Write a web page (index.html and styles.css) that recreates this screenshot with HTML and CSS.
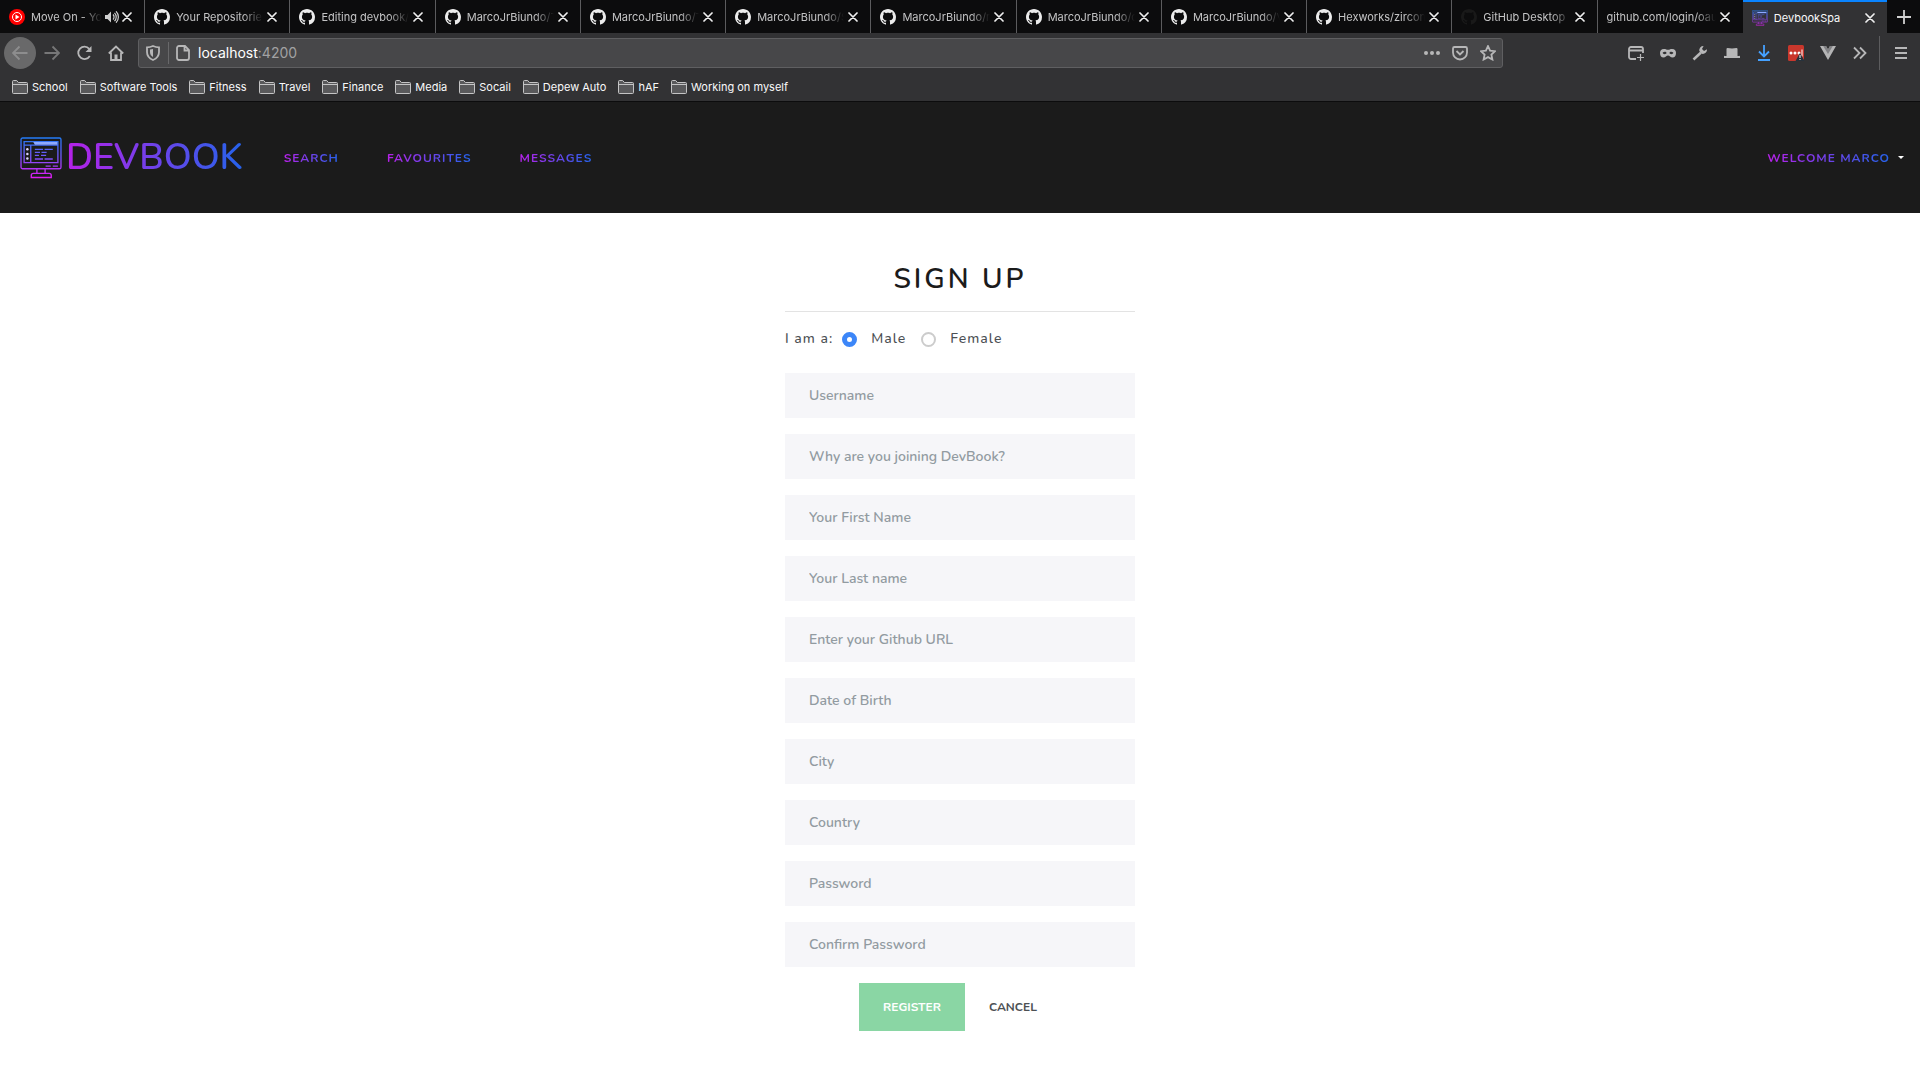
FILE: index.html
```html
<!DOCTYPE html>
<html lang="en">
<head>
<meta charset="utf-8">
<title>DevbookSpa</title>
<link rel="stylesheet" href="styles.css">
</head>
<body>
<svg class="defs" aria-hidden="true">
  <defs>
    <linearGradient id="brandFill" gradientUnits="userSpaceOnUse" x1="0" y1="0" x2="0" y2="41"><stop offset="0" stop-color="#1f7cf5"/><stop offset=".45" stop-color="#7058fa"/><stop offset="1" stop-color="#e818f4"/></linearGradient>
    <symbol id="github" viewBox="0 0 16 16"><path d="M8 0C3.58 0 0 3.58 0 8c0 3.54 2.29 6.53 5.47 7.59.4.07.55-.17.55-.38 0-.19-.01-.82-.01-1.49-2.01.37-2.53-.49-2.69-.94-.09-.23-.48-.94-.82-1.13-.28-.15-.68-.52-.01-.53.63-.01 1.08.58 1.23.82.72 1.21 1.87.87 2.33.66.07-.52.28-.87.51-1.07-1.78-.2-3.64-.89-3.64-3.95 0-.87.31-1.59.82-2.15-.08-.2-.36-1.02.08-2.12 0 0 .67-.21 2.2.82.64-.18 1.32-.27 2-.27s1.36.09 2 .27c1.53-1.04 2.2-.82 2.2-.82.44 1.1.16 1.92.08 2.12.51.56.82 1.27.82 2.15 0 3.07-1.87 3.75-3.65 3.95.29.25.54.73.54 1.48 0 1.07-.01 1.93-.01 2.2 0 .21.15.46.55.38A8.01 8.01 0 0 0 16 8c0-4.42-3.58-8-8-8z" fill="currentColor"/></symbol>
    <symbol id="close" viewBox="0 0 10 10"><path d="M1 1l8 8M9 1l-8 8" stroke="currentColor" stroke-width="1.7" stroke-linecap="round"/></symbol>
    <symbol id="folder" viewBox="0 0 16 14"><path d="M.5 12.5v-11a1 1 0 0 1 1-1h3.2l1.6 2h8.2a1 1 0 0 1 1 1v9a1 1 0 0 1-1 1h-13a1 1 0 0 1-1-1zM.5 4.500h15" fill="#59595b" stroke="#c4c4c5"/></symbol>
    <symbol id="monitor" viewBox="0 0 41 41">
      <g fill="none" stroke="url(#brandFill)" stroke-width="1.3">
        <rect x="1" y="1" width="39" height="30" rx="1.5"/><path d="M4 4.500h33v20.500h-33zM10.500 8v17M4 8h33M16.500 31v4.500M24.500 31v4.500M13 35.500h15.500a2 2 0 0 1 2 2v2h-19.500v-2a2 2 0 0 1 2-2z"/>
        <path d="M14.500 12h8M24 12h8M14.500 15h5M21 15h5M14.500 18h4M20.500 18h5M14.500 21.500h8M24 21.500h8M25 28.500h5M32 28.500h5"/>
      </g>
      <path d="M13 5h23.500v2.600H14.500z" fill="#8eaaff"/>
      <g fill="#ddd3ff"><circle cx="7.200" cy="12" r="1.200"/><circle cx="7.200" cy="16.500" r="1.200"/><circle cx="7.200" cy="21" r="1.200"/></g>
    </symbol>
  </defs>
</svg>

<header class="browser">
  <div class="tabs">
    <div class="tab"><svg class="favicon" viewBox="0 0 16 16"><circle cx="8" cy="8" r="8" fill="#f00"/><circle cx="8" cy="8" r="4.500" fill="none" stroke="#fff"/><path d="M6.500 5.500v5l4-2.500z" fill="#fff"/></svg><span class="tab-title">Move On - YouTube</span><svg class="speaker" viewBox="0 0 14 12" fill="none" stroke="#d0d0d0" stroke-width="1.200"><path d="M0 4h2.500L6 .5v11L2.500 8H0z" fill="#d0d0d0" stroke="none"/><path d="M8 3.500a3.500 3.500 0 0 1 0 5M9.500 1.800a6 6 0 0 1 0 8.400M11 .3a8 8 0 0 1 0 11.400"/></svg><button class="tab-close" aria-label="Close tab"><svg><use href="#close"/></svg></button></div>
    <div class="tab"><svg class="favicon"><use href="#github"/></svg><span class="tab-title">Your Repositories</span><button class="tab-close" aria-label="Close tab"><svg><use href="#close"/></svg></button></div>
    <div class="tab"><svg class="favicon"><use href="#github"/></svg><span class="tab-title">Editing devbook/README</span><button class="tab-close" aria-label="Close tab"><svg><use href="#close"/></svg></button></div>
    <div class="tab"><svg class="favicon"><use href="#github"/></svg><span class="tab-title">MarcoJrBiundo/TodoApp</span><button class="tab-close" aria-label="Close tab"><svg><use href="#close"/></svg></button></div>
    <div class="tab"><svg class="favicon"><use href="#github"/></svg><span class="tab-title">MarcoJrBiundo/TodoApp</span><button class="tab-close" aria-label="Close tab"><svg><use href="#close"/></svg></button></div>
    <div class="tab"><svg class="favicon"><use href="#github"/></svg><span class="tab-title">MarcoJrBiundo/Spa</span><button class="tab-close" aria-label="Close tab"><svg><use href="#close"/></svg></button></div>
    <div class="tab"><svg class="favicon"><use href="#github"/></svg><span class="tab-title">MarcoJrBiundo/repo</span><button class="tab-close" aria-label="Close tab"><svg><use href="#close"/></svg></button></div>
    <div class="tab"><svg class="favicon"><use href="#github"/></svg><span class="tab-title">MarcoJrBiundo/chat</span><button class="tab-close" aria-label="Close tab"><svg><use href="#close"/></svg></button></div>
    <div class="tab"><svg class="favicon"><use href="#github"/></svg><span class="tab-title">MarcoJrBiundo/Vue</span><button class="tab-close" aria-label="Close tab"><svg><use href="#close"/></svg></button></div>
    <div class="tab"><svg class="favicon"><use href="#github"/></svg><span class="tab-title">Hexworks/zircon</span><button class="tab-close" aria-label="Close tab"><svg><use href="#close"/></svg></button></div>
    <div class="tab"><svg class="favicon favicon-dark"><use href="#github"/></svg><span class="tab-title">GitHub Desktop</span><button class="tab-close" aria-label="Close tab"><svg><use href="#close"/></svg></button></div>
    <div class="tab"><span class="tab-title">github.com/login/oauth</span><button class="tab-close" aria-label="Close tab"><svg><use href="#close"/></svg></button></div>
    <div class="tab tab-active"><svg class="favicon"><use href="#monitor"/></svg><span class="tab-title">DevbookSpa</span><button class="tab-close" aria-label="Close tab"><svg><use href="#close"/></svg></button></div>
    <button class="new-tab" aria-label="New tab"><svg viewBox="0 0 14 14"><path d="M7 0v14M0 7h14" stroke="#d0d0d0" stroke-width="1.800"/></svg></button>
  </div>

  <div class="toolbar">
    <button class="tool back" aria-label="Back"><svg viewBox="0 0 16 16"><path d="M15.500 8H1M7.500 1.500L1 8l6.500 6.500"/></svg></button>
    <button class="tool forward" aria-label="Forward"><svg viewBox="0 0 16 16"><path d="M.5 8H15M8.500 1.500L15 8l-6.500 6.500"/></svg></button>
    <button class="tool" aria-label="Reload"><svg viewBox="0 0 16 16"><path d="M13.800 11a6.200 6.200 0 1 1-.6-7.200"/><path d="M15.500 1v6h-6z" fill="currentColor" stroke="none"/></svg></button>
    <button class="tool" aria-label="Home"><svg viewBox="0 0 16 16"><path d="M.8 8.500L8 1.500l7.200 7M3 7.500V15h10V7.500"/><path d="M6.500 9.500h3V15h-3z" fill="currentColor" stroke="none"/></svg></button>
    <div class="address">
      <svg class="shield" viewBox="0 0 14 16"><path d="M7 1c2 .9 4 1.300 6 1.300V7c0 4-2.300 6.500-6 8-3.700-1.500-6-4-6-8V2.300C3 2.300 5 1.900 7 1z"/><path d="M7 4v8C5 10.800 4 9.300 4 7V4.600z" fill="currentColor" stroke="none"/></svg>
      <span class="divider"></span>
      <svg class="page" viewBox="0 0 14 16"><path d="M3 1h6l4 4v8a2 2 0 0 1-2 2H3a2 2 0 0 1-2-2V3a2 2 0 0 1 2-2zM8.500 1v4.500H13"/></svg>
      <p class="url">localhost<span>:4200</span></p>
      <svg class="dots" viewBox="0 0 16 16"><g fill="currentColor" stroke="none"><circle cx="2" cy="8" r="2"/><circle cx="8" cy="8" r="2"/><circle cx="14" cy="8" r="2"/></g></svg>
      <svg viewBox="0 0 16 16"><path d="M2.500 2h11a1.500 1.500 0 0 1 1.500 1.500V7.500a7 7 0 0 1-14 0V3.500A1.500 1.500 0 0 1 2.500 2zM4.500 6L8 9.500 11.500 6"/></svg>
      <svg viewBox="0 0 16 16"><path d="M8 1l2.100 4.600 5 .6-3.700 3.400 1 4.900L8 12.100l-4.400 2.400 1-4.900L.9 6.200l5-.6z"/></svg>
    </div>
    <div class="extensions">
      <svg viewBox="0 0 16 16"><path d="M8 14H3a2 2 0 0 1-2-2V4a2 2 0 0 1 2-2h10a2 2 0 0 1 2 2V8M1 5.500h14"/><path d="M12.500 9v7M9 12.500h7" stroke-width="1.200"/></svg>
      <svg viewBox="0 0 16 16"><path fill="currentColor" stroke="none" fill-rule="evenodd" d="M4 4c2 0 2.500.8 4 .8S10 4 12 4c3 0 4 2 4 4 0 3-1.500 4.500-3.500 4.500C10.500 12.500 9.500 10.500 8 10.500s-2.500 2-4.500 2S0 11 0 8c0-2 1-4 4-4zM4.700 6.800c-1.400 0-2 .8-2 1.200s.9 1.200 2 1.200S6.500 8.500 6.500 8s-.4-1.200-1.800-1.200zM11.300 6.800c-1.400 0-1.800.7-1.800 1.200s.7 1.200 1.800 1.200 2-.8 2-1.200-.6-1.200-2-1.200z"/></svg>
      <svg viewBox="0 0 16 16"><path d="M1.500 14.500L9 7.500" stroke-width="2.500"/><path d="M15 4.300L12 6 10 4l1.600-3A4.200 4.200 0 0 0 7.300 6L10 8.800a4.200 4.200 0 0 0 5-4.500z" fill="currentColor" stroke="none"/></svg>
      <svg viewBox="0 0 16 16"><path fill="currentColor" stroke="none" d="M2.500 11V4a1 1 0 0 1 1-1c3 .5 6 .5 9 0a1 1 0 0 1 1 1v7h1.500a1 1 0 0 1 1 2H0a1 1 0 0 1 1-2z"/></svg>
      <svg class="download" viewBox="0 0 16 16"><path d="M8 0v11.500M3 6.500l5 5 5-5M2 15h12"/></svg>
      <svg viewBox="0 0 16 16"><rect width="16" height="16" rx="1.500" fill="#c9372c" stroke="none"/><g fill="#fff" stroke="none"><circle cx="3" cy="8" r="1.500"/><circle cx="7" cy="8" r="1.500"/><circle cx="11" cy="8" r="1.500"/><path d="M13.500 4.500h1v7h-1z"/></g><path d="M12 8l4.500 8h-9z" fill="#26323c" stroke="none"/><path d="M12 10v3M12 14v1" stroke="#fff" stroke-width="1"/></svg>
      <svg viewBox="0 0 16 16"><path d="M0 1h6l2 3.500L10 1h6L8 15z" fill="#b4b4b5" stroke="none"/><path d="M3.200 1H6l2 3.500L10 1h2.800L8 9z" fill="#808083" stroke="none"/></svg>
      <svg viewBox="0 0 16 16"><path d="M2 2.500L7.500 8 2 13.500M8 2.500L13.500 8 8 13.500"/></svg>
    </div>
    <span class="menu-line"></span>
    <button class="tool menu" aria-label="Menu"><svg viewBox="0 0 16 16"><path d="M2 3h12M2 8h12M2 13h12"/></svg></button>
  </div>

  <nav class="bookmarks" aria-label="Bookmarks">
    <a href="#"><svg><use href="#folder"/></svg>School</a>
    <a href="#"><svg><use href="#folder"/></svg>Software Tools</a>
    <a href="#"><svg><use href="#folder"/></svg>Fitness</a>
    <a href="#"><svg><use href="#folder"/></svg>Travel</a>
    <a href="#"><svg><use href="#folder"/></svg>Finance</a>
    <a href="#"><svg><use href="#folder"/></svg>Media</a>
    <a href="#"><svg><use href="#folder"/></svg>Socail</a>
    <a href="#"><svg><use href="#folder"/></svg>Depew Auto</a>
    <a href="#"><svg><use href="#folder"/></svg>hAF</a>
    <a href="#"><svg><use href="#folder"/></svg>Working on myself</a>
  </nav>
</header>

<nav class="navbar">
  <a class="brand" href="#"><svg><use href="#monitor"/></svg><span class="gradient">DEVBOOK</span></a>
  <div class="links">
    <a class="gradient" href="#">SEARCH</a>
    <a class="gradient" href="#">FAVOURITES</a>
    <a class="gradient" href="#">MESSAGES</a>
  </div>
  <button class="account"><span class="gradient">WELCOME MARCO</span><span class="caret"></span></button>
</nav>

<main>
  <form class="signup">
    <h1>SIGN UP</h1>
    <hr>
    <div class="gender">
      <span>I am a:</span>
      <label><input type="radio" name="gender" checked>Male</label>
      <label><input type="radio" name="gender">Female</label>
    </div>
    <input class="field" type="text" placeholder="Username" aria-label="Username">
    <input class="field" type="text" placeholder="Why are you joining DevBook?" aria-label="Why are you joining DevBook?">
    <input class="field" type="text" placeholder="Your First Name" aria-label="Your First Name">
    <input class="field" type="text" placeholder="Your Last name" aria-label="Your Last name">
    <input class="field" type="text" placeholder="Enter your Github URL" aria-label="Enter your Github URL">
    <input class="field" type="text" placeholder="Date of Birth" aria-label="Date of Birth">
    <input class="field" type="text" placeholder="City" aria-label="City">
    <input class="field" type="text" placeholder="Country" aria-label="Country">
    <input class="field" type="password" placeholder="Password" aria-label="Password">
    <input class="field" type="password" placeholder="Confirm Password" aria-label="Confirm Password">
    <div class="actions">
      <button class="register" type="submit">REGISTER</button>
      <button class="cancel" type="button">CANCEL</button>
    </div>
  </form>
</main>
</body>
</html>
```
FILE: styles.css
```css
* { box-sizing: border-box; }
body { margin: 0; background: #fff; color: #4c5054; font: 500 14px/20px Nunito, Lato, sans-serif; }
button { padding: 0; border: 0; background: none; color: inherit; font: inherit; cursor: pointer; }
a { color: inherit; text-decoration: none; }
svg { display: block; flex: none; }
.defs { position: absolute; width: 0; height: 0; }

.browser { background: #323234; color: #f9f9fa; font-family: Inter, sans-serif; border-bottom: 1px solid #0c0c0d; }
.tabs { display: flex; height: 33px; background: #0c0c0d; }
.tab { flex: 1 1 0; min-width: 0; display: flex; align-items: center; padding: 1px 12px 0 9px; border-right: 1px solid #5c5c5e; color: #c4c4c5; font-size: 11px; font-weight: 400; }
.tab:nth-last-child(3) { border-right: 0; padding-right: 13px; }
.tab-active { background: #323234; border-top: 2px solid #0a84ff; border-right: 0; padding-top: 0; color: #f9f9fa; }
.favicon { width: 16px; height: 16px; margin-right: 6px; color: #ececec; }
.favicon-dark { color: #191919; }
.tab-title { flex: 1; min-width: 0; overflow: hidden; white-space: nowrap; mask-image: linear-gradient(to left, transparent, #000 20px); }
.tab-active .tab-title { mask-image: none; }
.speaker { width: 14px; height: 12px; margin: 0 -1px 0 3px; }
.tab-close { margin-left: 4px; color: #f0f0f0; }
.tab-close svg { width: 10px; height: 10px; }
.new-tab { width: 33px; display: grid; place-items: center; }
.new-tab svg { width: 14px; height: 14px; }

.toolbar { display: flex; align-items: center; height: 40px; padding: 0 3px 0 4px; color: #b7b7b8; }
.toolbar svg { width: 16px; height: 16px; fill: none; stroke: currentColor; stroke-width: 1.800; }
.tool { width: 32px; height: 32px; display: grid; place-items: center; }
.back { border-radius: 50%; background: #69696a; color: #8d8d8e; }
.forward { color: #777778; }
.address { flex: 1; height: 30px; display: flex; align-items: center; margin: 0 125px 0 6px; padding: 0 6px 0 7px; border: 1px solid #5f5f61; border-radius: 3px; background: #474749; gap: 12px; }
.toolbar .shield, .toolbar .page { width: 14px; }
.divider { width: 1px; height: 22px; margin: 0 -5px 0 -4px; background: #68686a; }
.url { flex: 1; margin: 0 0 0 -4px; color: #fff; font-size: 14px; font-weight: 400; }
.url span { color: #a2a2a3; }
.extensions { display: flex; gap: 16px; margin-right: 11px; }
.extensions .download { color: #45a1ff; }
.menu-line { width: 1px; height: 34px; margin-right: 5px; background: #5c5c5e; }
.bookmarks { display: flex; gap: 12px; height: 28px; padding: 0 12px; font-size: 11px; font-weight: 400; }
.bookmarks a { display: flex; align-items: center; gap: 4px; white-space: nowrap; }
.bookmarks svg { width: 16px; height: 14px; }

.navbar { display: flex; align-items: center; min-height: 111px; padding: 0 16px 0 20px; background: #1b1b1b; }
.gradient { background: linear-gradient(90deg, #b721e8, #2563eb); background-clip: text; -webkit-text-fill-color: transparent; }
.brand { display: flex; align-items: center; gap: 4px; font-size: 36px; line-height: 48px; font-weight: 600; }
.brand svg { width: 42px; height: 42px; }
.links { display: flex; gap: 48px; margin-left: 41px; }
.links a, .account { font-size: 12px; font-weight: 700; letter-spacing: 1px; }
.account { display: flex; align-items: center; gap: 8px; margin-left: auto; }
.caret { border: 3px solid transparent; border-top-color: #fff; border-bottom: 0; }

.signup { display: flex; flex-direction: column; width: 350px; margin: 0 auto; padding: 45px 0 48px; }
h1 { margin: 0; color: #1b1b1b; font-size: 28px; line-height: 42px; font-weight: 600; letter-spacing: 3px; text-align: center; }
hr { width: 100%; height: 1px; margin: 11px 0 17px; border: 0; background: #e3e3e3; }
.gender { display: flex; align-items: center; margin-bottom: 24px; letter-spacing: 1px; }
.gender label { display: flex; align-items: center; margin-left: 9px; margin-right: 6px; }
.gender input { appearance: none; width: 15px; height: 15px; margin: 0 14px 0 0; border: 2px solid #ccc; border-radius: 50%; background: #fff; }
.gender input:checked { border: 5px solid #3c86f8; }
.field { width: 100%; height: 45px; margin: 0 0 16px; padding: 0 24px; border: 0; border-radius: 0; background: #f6f6f9; color: #4c5054; font: 600 14px/20px Nunito, Lato, sans-serif; }
.field::placeholder { color: #929ba1; opacity: 1; }
.actions { display: flex; justify-content: center; font-size: 12px; font-weight: 700; }
.actions button { height: 48px; padding: 0 24px; }
.register { background: #8ad6a4; color: #fff; }
```
